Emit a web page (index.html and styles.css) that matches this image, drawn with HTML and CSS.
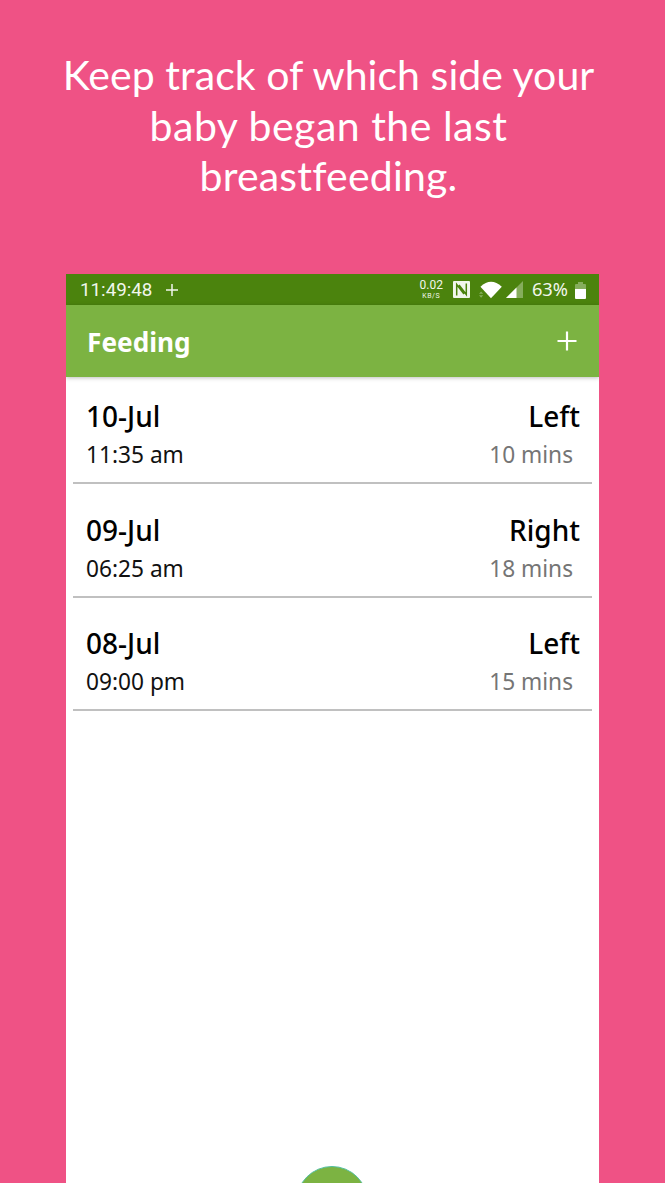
FILE: index.html
```html
<!DOCTYPE html>
<html lang="en">
<head>
<meta charset="utf-8">
<title>Feeding</title>
<link rel="stylesheet" href="styles.css">
</head>
<body>
<main class="promo">
  <h1 class="headline">
    <span class="line line-one">Keep track of which side your</span>
    <span class="line line-two">baby began the last</span>
    <span class="line line-three">breastfeeding.</span>
  </h1>
  <section class="phone">
    <div class="status">
      <span class="clock">11:49:48</span>
      <svg class="status-plus" viewBox="0 0 12 12"><path d="M6 0V12M0 6H12" stroke="#f1f6ec" stroke-width="1.5"/></svg>
      <div class="rate"><span class="rate-value">0.02</span><span class="rate-unit">KB/S</span></div>
      <svg class="nfc" viewBox="0 0 17 17"><rect width="17" height="17" rx="1" fill="#f1f6ec"/><path d="M3.700 14.500V3.500L11 13M6 4L13.300 13.500V2.500" fill="none" stroke="#4b830d" stroke-width="1.5"/></svg>
      <svg class="wifi" viewBox="0 0 24 18"><path d="M1.500 5.500Q12.500 -4.500 23.800 5.500L12.500 17.500Z" fill="#fff"/><path d="M0 13L2.200 10.600L4.400 13ZM0 14.500H4.400L2.200 17Z" fill="#86ad5c"/></svg>
      <svg class="signal" viewBox="0 0 17 17"><path d="M17 0V17H0Z" fill="#86ad5c"/><path d="M10.500 6.500V17H0Z" fill="#fff"/></svg>
      <span class="percent">63%</span>
      <svg class="battery" viewBox="0 0 11 17"><path d="M3 0H8V2H10Q11 2 11 3V8H0V3Q0 2 1 2H3Z" fill="#86ad5c"/><path d="M0 7H11V16Q11 17 10 17H1Q0 17 0 16Z" fill="#fff"/></svg>
    </div>
    <header class="appbar">
      <h2 class="title">Feeding</h2>
      <svg class="add" viewBox="0 0 20 20"><path d="M10 0.500V19.500M0.500 10H19.500" stroke="#fff" stroke-width="2.200"/></svg>
    </header>
    <div class="list">
      <article class="entry">
        <div class="row main"><span class="date">10-Jul</span><span class="side">Left</span></div>
        <div class="row detail"><span class="time">11:35 am</span><span class="duration">10 mins</span></div>
      </article>
      <article class="entry">
        <div class="row main"><span class="date">09-Jul</span><span class="side">Right</span></div>
        <div class="row detail"><span class="time">06:25 am</span><span class="duration">18 mins</span></div>
      </article>
      <article class="entry">
        <div class="row main"><span class="date">08-Jul</span><span class="side">Left</span></div>
        <div class="row detail"><span class="time">09:00 pm</span><span class="duration">15 mins</span></div>
      </article>
    </div>
    <div class="fab"></div>
  </section>
</main>
</body>
</html>
```
FILE: styles.css
```css
* { box-sizing: border-box; }
body { margin: 0; font-family: "Noto Sans", sans-serif; }
svg { display: block; flex: none; }
.promo {
  height: 1183px;
  padding: 50px 66px 0;
  background: #ef5285;
  overflow: hidden;
}
.headline {
  height: 224px;
  margin: 0 4px 0 -4px;
  color: #fff;
  font: 400 41px/50.500px Lato, sans-serif;
  display: flex;
  flex-direction: column;
  align-items: center;
}
.line { white-space: nowrap; }
.line-one { letter-spacing: 0.05px; }
.line-two { letter-spacing: 0.5px; }
.line-three { letter-spacing: 0.2px; }
.phone {
  position: relative;
  width: 533px;
  height: 909px;
  background: #fff;
  overflow: hidden;
}
.status {
  display: flex;
  align-items: center;
  height: 31px;
  padding: 0 13px 0 14px;
  background: #4b830d;
  color: #f1f6ec;
  font: 400 18.800px/31px Roboto, sans-serif;
}
.clock { padding-top: 1px; }
.status-plus { width: 12px; height: 12px; margin-left: 14px; }
.rate {
  display: flex;
  flex-direction: column;
  align-items: center;
  margin-left: auto;
}
.rate-value { font-size: 12px; line-height: 13px; }
.rate-unit { font-size: 7px; line-height: 8px; letter-spacing: 0.5px; }
.nfc { width: 17px; height: 17px; margin-left: 10px; }
.wifi { width: 23px; height: 18px; margin-left: 9px; }
.signal { width: 17px; height: 17px; margin-left: 4px; }
.percent { font: 400 18.300px/29px "Noto Sans", sans-serif; margin: 0 0 2px 9px; }
.battery { width: 11px; height: 17px; margin: 1px 0 0 7px; }
.appbar {
  display: flex;
  align-items: center;
  justify-content: space-between;
  height: 72px;
  padding: 0 22px 0 21px;
  background: #7cb342;
  box-shadow: 0 1px 4px rgba(0, 0, 0, 0.25);
}
.title { margin: 1px 0 0; color: #fff; font-size: 26.200px; font-weight: 700; line-height: 36px; }
.add { width: 20px; height: 20px; }
.list { padding: 0 7px; }
.entry {
  height: 113.700px;
  padding: 25.500px 12px 0 13px;
  border-bottom: 2px solid #c0c0c0;
}
.entry:first-child { height: 107px; padding-top: 19px; }
.row { display: flex; justify-content: space-between; }
.main { font-size: 28px; line-height: 40px; font-weight: 500; color: #000; }
.detail { font-size: 22.700px; line-height: 37px; color: #111; }
.duration { color: #757575; margin-right: 7px; }
.fab {
  position: absolute;
  top: 892px;
  left: 230px;
  width: 72px;
  height: 72px;
  border: 1px solid #52bfa0;
  border-radius: 50%;
  background: #7cb342;
}
```
